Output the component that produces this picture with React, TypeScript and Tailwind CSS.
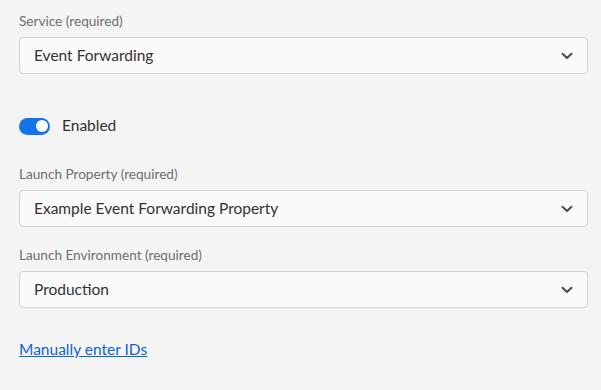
import React from "react";

function Chevron() {
  return (
    <svg width="12" height="8" viewBox="0 0 12 8" className="shrink-0">
      <path d="M1.5 1.8 L6 6 L10.5 1.8" fill="none" stroke="#4b4b4b" strokeWidth="2" strokeLinecap="round" strokeLinejoin="round" />
    </svg>
  );
}

function Picker({ label, value }: { label: string; value: string }) {
  return (
    <div className="flex flex-col">
      <div className="text-[13.6px] leading-[18px] text-[#6e6e6e]">{label}</div>
      <div className="mt-[7px] h-[37px] rounded-[4px] border border-[#d3d3d3] bg-[#fafafa] flex items-center justify-between pl-[14px] pr-[14px]">
        <span className="text-[15.5px] text-[#323232]">{value}</span>
        <Chevron />
      </div>
    </div>
  );
}

export default function App() {
  return (
    <div
      className="w-[601px] h-[390px] bg-[#f4f4f4] px-[19px] pt-[12px] flex flex-col"
      style={{ fontFamily: "Lato, 'Noto Sans', sans-serif" }}
    >
      <div className="w-[569px]">
        <Picker label="Service (required)" value="Event Forwarding" />
        <div className="h-[32px] mt-[36px] flex items-center gap-[12px]">
          <div className="w-[31px] h-[17px] rounded-full bg-[#1473e6] flex items-center justify-end pr-[2px]">
            <div className="w-[12px] h-[12px] rounded-full bg-white" />
          </div>
          <span className="text-[15.5px] text-[#323232]">Enabled</span>
        </div>
        <div className="mt-[23px]">
          <Picker label="Launch Property (required)" value="Example Event Forwarding Property" />
        </div>
        <div className="mt-[19px]">
          <Picker label="Launch Environment (required)" value="Production" />
        </div>
        <div className="mt-[29px]">
          <a href="#" className="text-[15.5px] leading-[20px] text-[#0d66d0] underline">
            Manually enter IDs
          </a>
        </div>
      </div>
    </div>
  );
}
